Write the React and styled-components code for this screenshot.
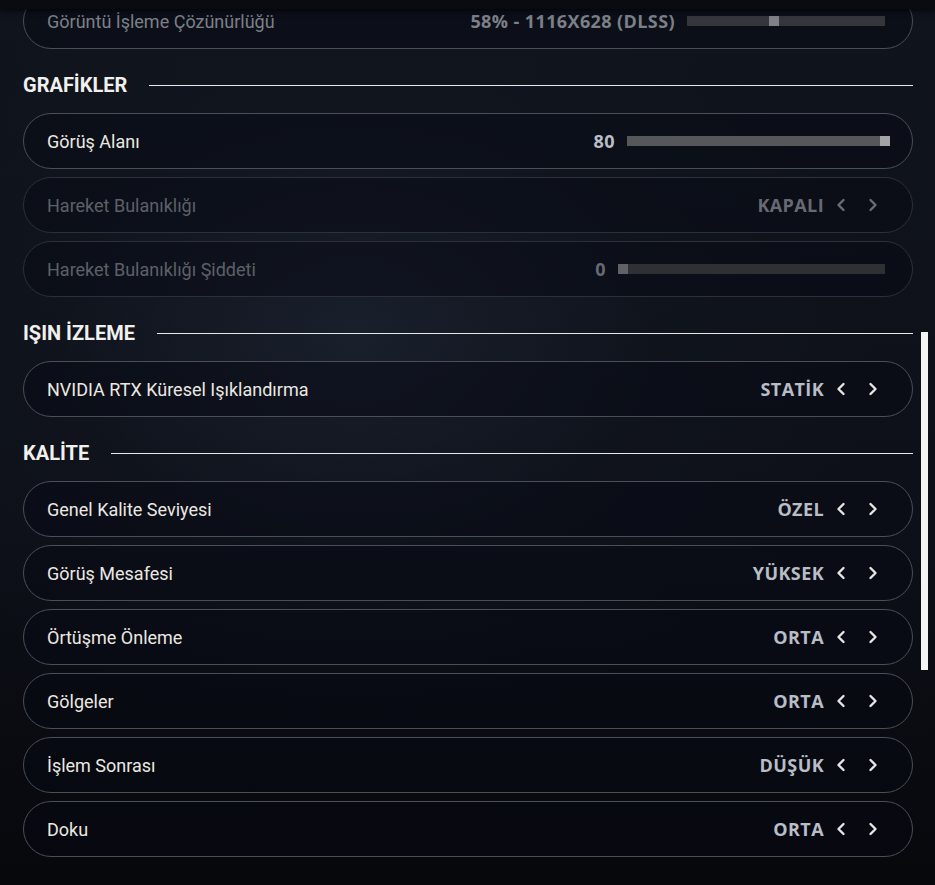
import React from 'react'
import styled, { createGlobalStyle } from 'styled-components'

const GlobalStyle = createGlobalStyle`
  * { box-sizing: border-box; }
  body {
    margin: 0;
    background: #08090d;
    font-family: Roboto, "Noto Sans", sans-serif;
  }
`

export const Page = styled.div`
  position: relative;
  width: 935px;
  height: 885px;
  overflow: hidden;
  padding: 0 22px 0 23px;
  background:
    radial-gradient(ellipse 70% 55% at 38% 38%, rgba(34, 42, 58, 0.55) 0%, rgba(20, 25, 36, 0.3) 45%, rgba(0, 0, 0, 0) 80%),
    linear-gradient(180deg, #10141d 0%, #0d1018 60%, #07080c 100%);
`

export const TopShade = styled.div`
  position: absolute;
  top: 0;
  left: 0;
  right: 0;
  height: 9px;
  background: #0a0b10;
  box-shadow: 0 2px 6px rgba(0, 0, 0, 0.7);
  z-index: 2;
`

export const Scrollbar = styled.div`
  position: absolute;
  top: 332px;
  left: 921px;
  width: 7px;
  height: 338px;
  background: #f4f4f4;
`

export const List = styled.div`
  display: flex;
  flex-direction: column;
  gap: 8px;
  margin-top: -7px;
`

export const SectionHeader = styled.div`
  display: flex;
  align-items: center;
  gap: 22px;
  height: 24px;
  margin: 16px 0 8px;
`

export const SectionTitle = styled.h2`
  margin: 0;
  font-family: Roboto, sans-serif;
  font-size: 20px;
  font-weight: 700;
  color: #f2f0ec;
  letter-spacing: 0;
  white-space: nowrap;
`

export const SectionLine = styled.div`
  flex: 1;
  height: 1px;
  background: #e8e8e8;
`

export const Row = styled.div`
  display: flex;
  align-items: center;
  justify-content: space-between;
  height: 56px;
  padding: 0 ${p => p.$padRight || 29}px 0 23px;
  border: 1px solid ${p => (p.$dim ? '#2c3039' : '#4a4e58')};
  border-radius: 28px;
  background: rgba(6, 9, 20, 0.45);
`

export const Label = styled.span`
  font-size: 18px;
  font-weight: 400;
  color: ${p => p.$tone || '#ece8e1'};
`

export const Stepper = styled.div`
  display: flex;
  align-items: center;
`

export const Value = styled.span`
  font-family: "Open Sans", sans-serif;
  font-size: 18px;
  font-weight: 700;
  letter-spacing: 0.4px;
  color: ${p => p.$tone || '#b9bdc6'};
  margin-right: ${p => (p.$flush ? 0 : 7)}px;
`

export const Arrow = styled.button`
  display: flex;
  align-items: center;
  justify-content: center;
  width: 20px;
  height: 24px;
  padding: 0;
  border: 0;
  background: none;
  color: ${p => p.$tone || '#e6e6e6'};
  & + & { margin-left: 12px; }
`

export const SliderWrap = styled.div`
  display: flex;
  align-items: center;
  gap: 12px;
  margin-right: ${p => p.$end || 0}px;
`

export const Track = styled.div`
  position: relative;
  height: 10px;
  background: ${p => p.$track};
`

export const Thumb = styled.div`
  position: absolute;
  top: 0;
  width: 10px;
  height: 10px;
  background: ${p => p.$thumb};
`

const Chevron = ({ dir }) => (
  <svg width="10" height="14" viewBox="0 0 10 14" fill="none">
    <polyline
      points={dir === 'left' ? '7.5,2 2.5,7 7.5,12' : '2.5,2 7.5,7 2.5,12'}
      stroke="currentColor"
      strokeWidth="2.4"
      strokeLinecap="round"
      strokeLinejoin="round"
    />
  </svg>
)

function SelectRow({ label, value, dim }) {
  const tone = dim ? '#5d6068' : undefined
  return (
    <Row $dim={dim}>
      <Label $tone={tone}>{label}</Label>
      <Stepper>
        <Value $tone={dim ? '#676a72' : undefined}>{value}</Value>
        <Arrow $tone={dim ? '#6a6d75' : undefined}><Chevron dir="left" /></Arrow>
        <Arrow $tone={dim ? '#6a6d75' : undefined}><Chevron dir="right" /></Arrow>
      </Stepper>
    </Row>
  )
}

function SliderRow({ label, value, labelTone, valueTone, width, pos, track, thumb, end, dim }) {
  return (
    <Row $dim={dim} $padRight={22}>
      <Label $tone={labelTone}>{label}</Label>
      <SliderWrap $end={end}>
        <Value $tone={valueTone} $flush>{value}</Value>
        <Track $track={track} style={{ width }}>
          <Thumb $thumb={thumb} style={{ left: pos }} />
        </Track>
      </SliderWrap>
    </Row>
  )
}

const quality = [
  ['Genel Kalite Seviyesi', 'ÖZEL'],
  ['Görüş Mesafesi', 'YÜKSEK'],
  ['Örtüşme Önleme', 'ORTA'],
  ['Gölgeler', 'ORTA'],
  ['İşlem Sonrası', 'DÜŞÜK'],
  ['Doku', 'ORTA'],
]

export default function App() {
  return (
    <>
      <GlobalStyle />
      <Page>
        <TopShade />
        <List>
          <SliderRow
            label="Görüntü İşleme Çözünürlüğü"
            value="58% - 1116X628 (DLSS)"
            labelTone="#7d8087"
            valueTone="#7d8087"
            width={198}
            pos={82}
            track="#34363b"
            thumb="#7f8186"
            end={5}
          />

          <SectionHeader>
            <SectionTitle>GRAFİKLER</SectionTitle>
            <SectionLine />
          </SectionHeader>
          <SliderRow
            label="Görüş Alanı"
            value="80"
            width={263}
            pos={253}
            track="#55575b"
            thumb="#a3a4a6"
          />
          <SelectRow label="Hareket Bulanıklığı" value="KAPALI" dim />
          <SliderRow
            label="Hareket Bulanıklığı Şiddeti"
            value="0"
            labelTone="#5d6068"
            valueTone="#676a72"
            width={267}
            pos={0}
            track="#2e3034"
            thumb="#606267"
            end={5}
            dim
          />

          <SectionHeader>
            <SectionTitle>IŞIN İZLEME</SectionTitle>
            <SectionLine />
          </SectionHeader>
          <SelectRow label="NVIDIA RTX Küresel Işıklandırma" value="STATİK" />

          <SectionHeader>
            <SectionTitle>KALİTE</SectionTitle>
            <SectionLine />
          </SectionHeader>
          {quality.map(([label, value]) => (
            <SelectRow key={label} label={label} value={value} />
          ))}
        </List>
        <Scrollbar />
      </Page>
    </>
  )
}
